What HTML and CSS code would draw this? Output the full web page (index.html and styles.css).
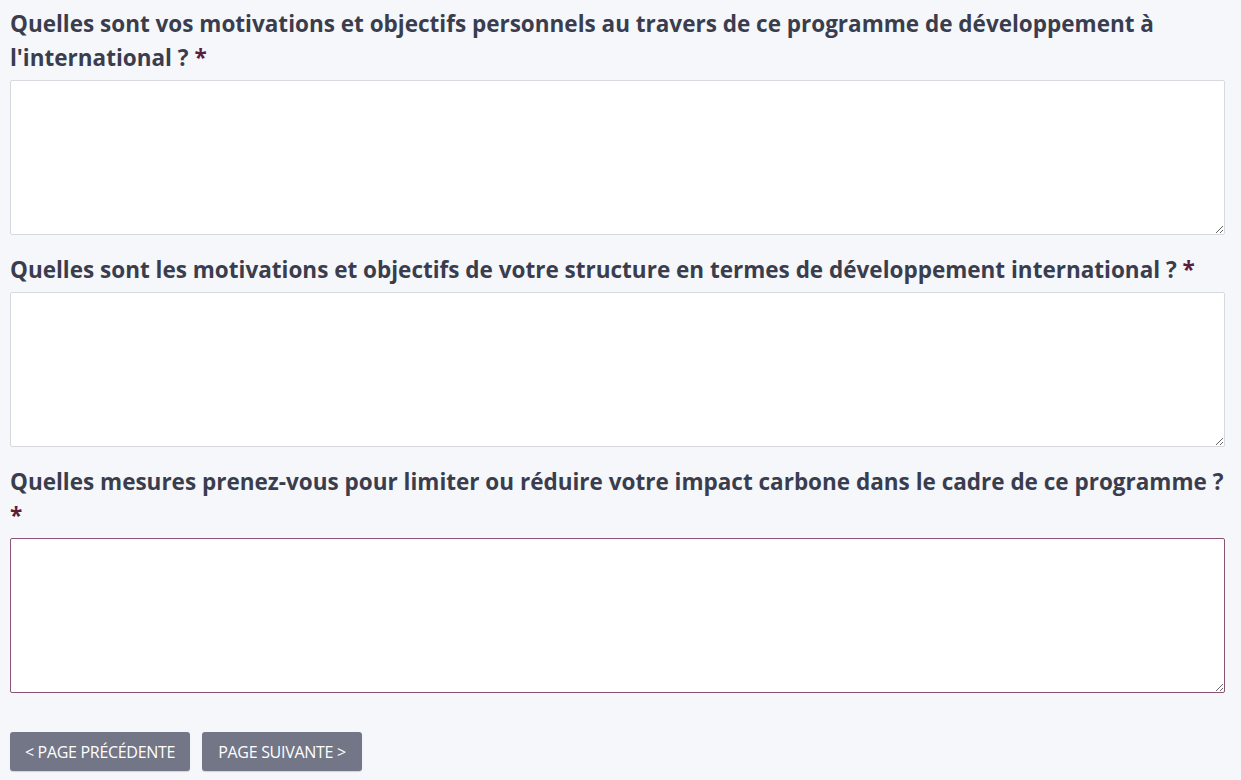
FILE: index.html
```html
<!DOCTYPE html>
<html lang="fr">
<head>
<meta charset="utf-8">
<link rel="stylesheet" href="styles.css">
</head>
<body>
<form class="form">
  <div class="field">
    <label class="label" for="q1">Quelles sont vos motivations et objectifs personnels au travers de ce programme de développement à l'international ? <span class="req">*</span></label>
    <textarea id="q1" class="input"></textarea>
  </div>
  <div class="field">
    <label class="label" for="q2">Quelles sont les motivations et objectifs de votre structure en termes de développement international ? <span class="req">*</span></label>
    <textarea id="q2" class="input"></textarea>
  </div>
  <div class="field">
    <label class="label" for="q3">Quelles mesures prenez-vous pour limiter ou réduire votre impact carbone dans le cadre de ce programme ? <span class="req">*</span></label>
    <textarea id="q3" class="input input-focus"></textarea>
  </div>
  <div class="actions">
    <button type="button" class="btn btn-prev">&lt; PAGE PRÉCÉDENTE</button>
    <button type="button" class="btn btn-next">PAGE SUIVANTE &gt;</button>
  </div>
</form>
</body>
</html>
```
FILE: styles.css
```css
html, body {
  margin: 0;
  padding: 0;
  background: #f5f7fa;
}
body {
  font-family: "Open Sans", "Liberation Sans", sans-serif;
  color: #3a3d4d;
}
.form {
  padding: 7px 16px 9px 10px;
  display: flex;
  flex-direction: column;
}
.field {
  display: flex;
  flex-direction: column;
  margin-bottom: 18px;
}
.label {
  font-size: 22.5px;
  font-weight: 700;
  line-height: 34px;
  margin-bottom: 5px;
}
.req {
  color: #5b1d3c;
}
.input {
  box-sizing: border-box;
  width: 100%;
  height: 155px;
  margin: 0;
  border: 1px solid #d6d9de;
  border-radius: 2px;
  background: #ffffff;
  font-family: inherit;
  font-size: 15px;
  padding: 6px 8px;
  resize: vertical;
  outline: none;
}
.input-focus {
  border-color: #8c5273;
}
.actions {
  display: flex;
  gap: 12px;
  margin-top: 21px;
}
.btn {
  height: 39px;
  padding: 0;
  border: none;
  border-radius: 3px;
  background: #737687;
  color: #ffffff;
  font-family: "Open Sans", "Liberation Sans", sans-serif;
  font-size: 16px;
  font-weight: 400;
  letter-spacing: -0.3px;
  box-shadow: 0 1px 1px rgba(0,0,0,0.15);
}
.btn-prev { width: 180px; }
.btn-next { width: 160px; }
```
